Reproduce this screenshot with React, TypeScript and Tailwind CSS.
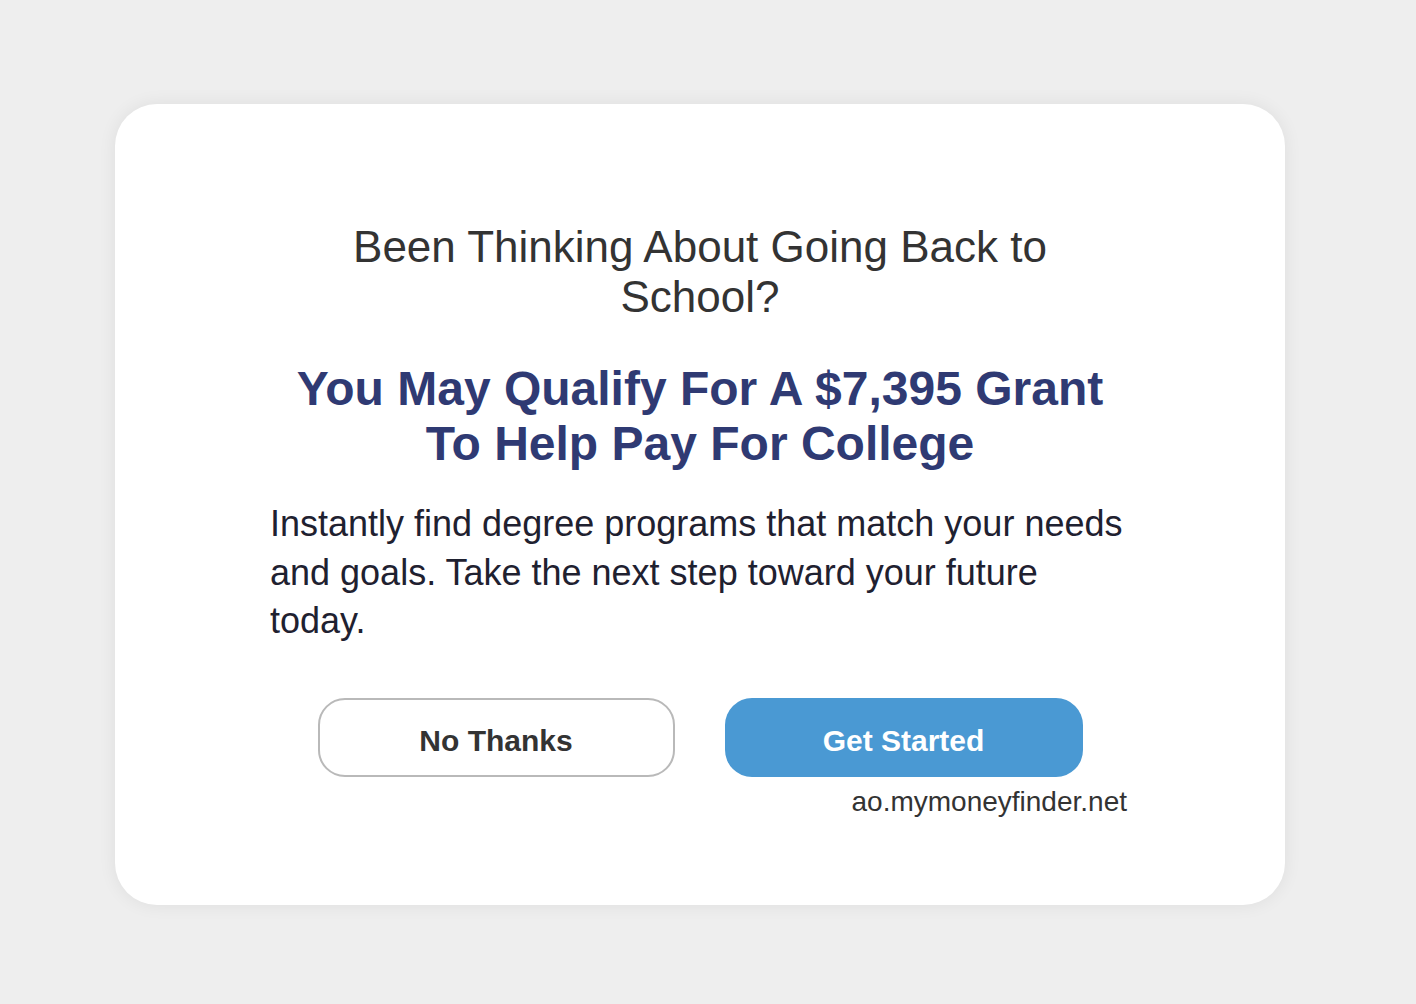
import React from "react";

export default function App() {
  return (
    <div
      className="min-h-[1004px] w-full bg-[#eeeeee] pt-[104px] pl-[115px]"
      style={{ fontFamily: '"Liberation Sans", Arial, Helvetica, sans-serif' }}
    >
      <div className="w-[1170px] h-[801px] rounded-[42px] bg-white shadow-[0_0_18px_rgba(0,0,0,0.07)] pt-[118px] flex flex-col items-center">
        <h1 className="max-w-[780px] text-center text-[44px] leading-[50px] text-[#333333] font-normal">
          Been Thinking About Going Back to School?
        </h1>
        <h2 className="mt-[39px] max-w-[860px] text-center text-[48px] leading-[55px] font-bold text-[#2f3a73]">
          You May Qualify For A $7,395 Grant To Help Pay For College
        </h2>
        <p className="mt-[29px] w-[860px] text-left text-[36px] leading-[48.5px] text-[#1f2130]">
          Instantly find degree programs that match your needs and goals. Take the next step toward your future today.
        </p>
        <div className="mt-[52px] flex gap-[50px]">
          <button className="w-[357px] h-[79px] rounded-[27px] border-2 border-[#b9b9b9] bg-white pt-[7px] text-[30px] font-bold text-[#333333]">
            No Thanks
          </button>
          <button className="w-[358px] h-[79px] rounded-[27px] bg-[#4a99d3] pt-[6px] text-[30px] font-bold text-white">
            Get Started
          </button>
        </div>
        <div className="mt-[9px] w-[860px] pr-[3px] text-right text-[28px] leading-[32px] text-[#333333]">
          ao.mymoneyfinder.net
        </div>
      </div>
    </div>
  );
}
